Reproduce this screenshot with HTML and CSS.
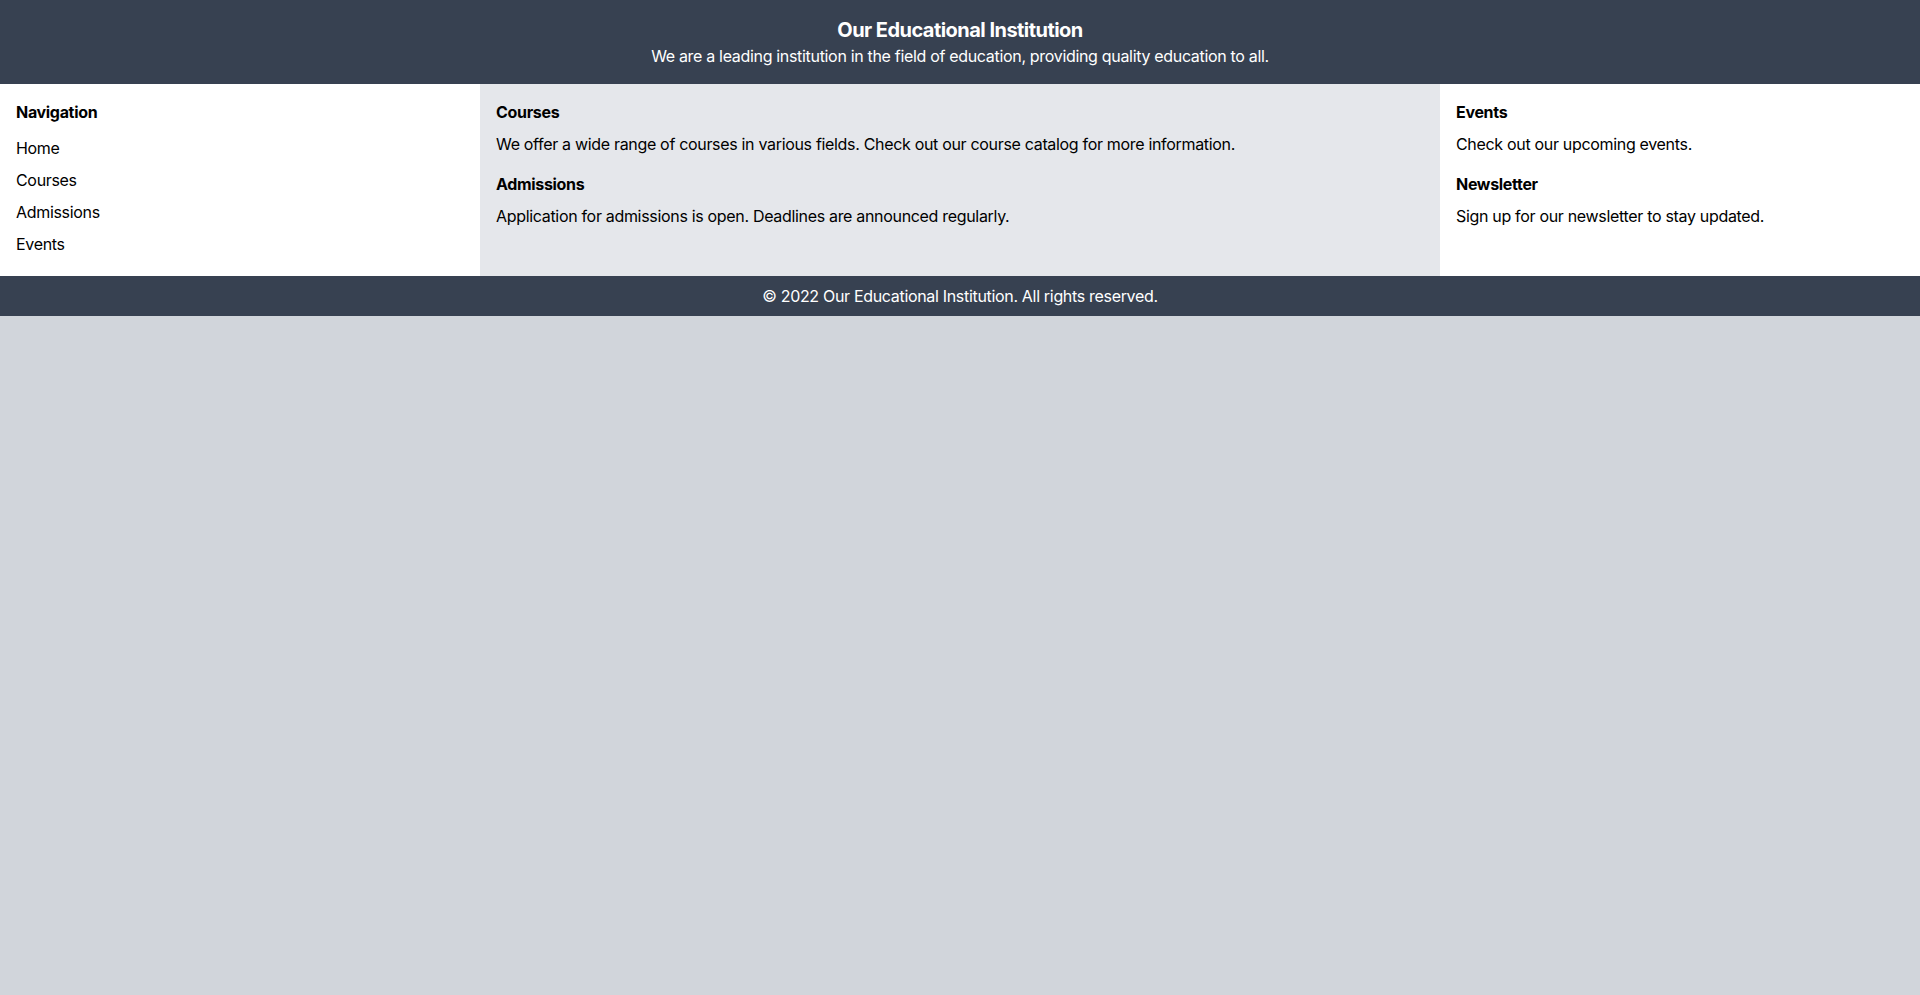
FILE: index.html
```html
<!DOCTYPE html>
<html lang="en">
<head>
<meta charset="utf-8">
<title>Our Educational Institution</title>
<link rel="stylesheet" href="styles.css">
</head>
<body>
<header class="site-header">
  <h1 class="site-title">Our Educational Institution</h1>
  <p class="site-tagline">We are a leading institution in the field of education, providing quality education to all.</p>
</header>
<main class="layout">
  <nav class="col col-nav">
    <h2 class="col-heading">Navigation</h2>
    <ul class="nav-list">
      <li class="nav-item">Home</li>
      <li class="nav-item">Courses</li>
      <li class="nav-item">Admissions</li>
      <li class="nav-item">Events</li>
    </ul>
  </nav>
  <section class="col col-main">
    <h2 class="col-heading">Courses</h2>
    <p class="col-text">We offer a wide range of courses in various fields. Check out our course catalog for more information.</p>
    <h2 class="col-heading">Admissions</h2>
    <p class="col-text">Application for admissions is open. Deadlines are announced regularly.</p>
  </section>
  <aside class="col col-side">
    <h2 class="col-heading">Events</h2>
    <p class="col-text">Check out our upcoming events.</p>
    <h2 class="col-heading">Newsletter</h2>
    <p class="col-text">Sign up for our newsletter to stay updated.</p>
  </aside>
</main>
<footer class="site-footer">
  <p class="footer-text">© 2022 Our Educational Institution. All rights reserved.</p>
</footer>
</body>
</html>
```

FILE: styles.css
```css
* { box-sizing: border-box; }
html, body {
  margin: 0;
  padding: 0;
}
body {
  background: #d1d5db;
  font-family: Inter, "Liberation Sans", sans-serif;
  font-size: 16px;
  line-height: 24px;
  letter-spacing: -0.02em;
  color: #000;
}
.site-header {
  background: #374151;
  color: #fff;
  text-align: center;
  padding: 16px;
}
.site-title {
  margin: 0;
  font-size: 20px;
  line-height: 28px;
  font-weight: 700;
  letter-spacing: -0.027em;
}
.site-tagline {
  margin: 0;
  font-size: 16px;
  line-height: 24px;
}
.layout {
  display: grid;
  grid-template-columns: 1fr 2fr 1fr;
}
.col {
  padding: 16px;
  background: #fff;
}
.col-main {
  background: #e5e7eb;
}
.col-heading {
  margin: 0 0 8px;
  font-size: 16px;
  line-height: 24px;
  font-weight: 700;
}
.col-text {
  margin: 0 0 16px;
}
.nav-list {
  list-style: none;
  margin: 0;
  padding: 0;
}
.nav-item {
  padding: 4px 0;
}
.site-footer {
  background: #374151;
  color: #fff;
  text-align: center;
  padding: 8px;
}
.footer-text {
  margin: 0;
}
```
